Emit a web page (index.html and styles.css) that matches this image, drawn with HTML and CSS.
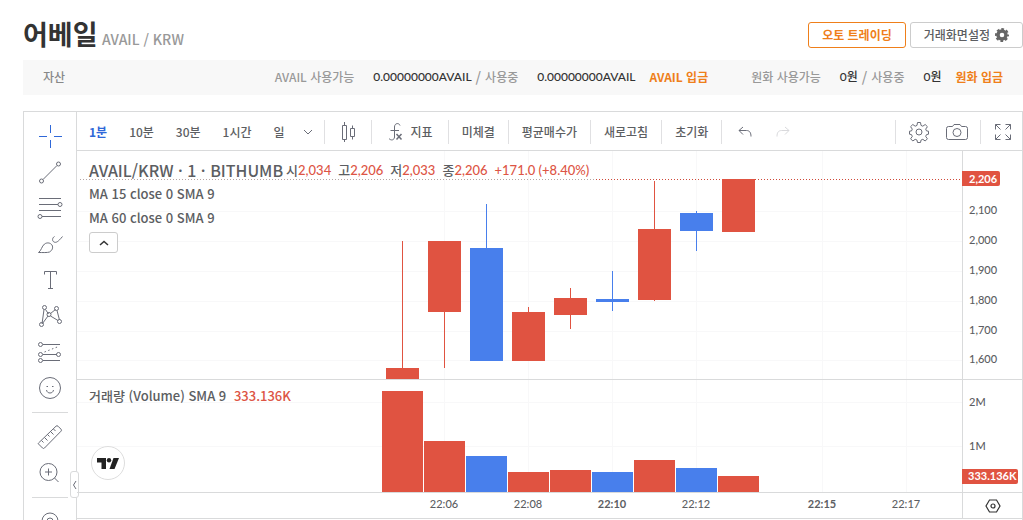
FILE: index.html
```html
<!DOCTYPE html>
<html lang="ko">
<head>
<meta charset="utf-8">
<title>어베일 AVAIL / KRW</title>
<link rel="stylesheet" href="styles.css">
</head>
<body>
<main class="page">
  <header class="head">
    <h1 class="coin">어베일 <span class="pair">AVAIL / KRW</span></h1>
    <div class="head-actions">
      <button class="btn btn-accent" type="button">오토 트레이딩</button>
      <button class="btn" type="button">거래화면설정
        <svg class="cog" width="14" height="14" viewBox="0 0 14 14" aria-hidden="true"><circle cx="7" cy="7" r="4" fill="none" stroke="#666" stroke-width="3.4"/><circle cx="7" cy="7" r="6" fill="none" stroke="#666" stroke-width="2" stroke-dasharray="2.7 2.01" stroke-dashoffset="1.35"/></svg>
      </button>
    </div>
  </header>

  <section class="assets">
    <span class="assets-title">자산</span>
    <div class="asset">
      <span class="muted">AVAIL 사용가능</span><b class="amount">0.00000000AVAIL</b><span class="slash">/</span><span class="muted">사용중</span><b class="amount">0.00000000AVAIL</b><a class="deposit" href="#avail">AVAIL 입금</a>
    </div>
    <div class="asset">
      <span class="muted">원화 사용가능</span><b class="amount">0원</b><span class="slash">/</span><span class="muted">사용중</span><b class="amount">0원</b><a class="deposit" href="#krw">원화 입금</a>
    </div>
  </section>

  <section class="widget">
    <nav class="tools" aria-label="그리기 도구">
      <button class="tool active" type="button" aria-label="십자선"><svg width="28" height="28"><path d="M14.5 3v8M14.5 18v8M3 14.5h8M18 14.5h8"/></svg></button>
      <button class="tool" type="button" aria-label="추세선"><svg width="28" height="28"><path d="M7 21.500L21 7.500"/><circle cx="5.500" cy="23" r="2"/><circle cx="22.500" cy="6" r="2"/></svg></button>
      <button class="tool" type="button" aria-label="피보나치"><svg width="28" height="28"><path d="M3 4.500h22M3 10.500h19M3 16.500h22M6 22.500h19"/><circle cx="24" cy="10.500" r="2"/><circle cx="4" cy="22.500" r="2"/></svg></button>
      <button class="tool" type="button" aria-label="브러시"><svg width="28" height="28"><path d="M2.500 22.500c3-2 3-6 6-8.500 3-2 6-1 7.500 1 1.500 3 0 5.500-2.500 7-2 .800-7 .500-11 .500zM18.500 6.500c-2.500 1.500-2.500 4.500-.500 5.500 2 1 4 0 8.500-5.500"/></svg></button>
      <button class="tool" type="button" aria-label="텍스트"><svg width="28" height="28"><path d="M8.500 8.500v-3h12v3M14.500 5.500v17M12 22.500h5"/></svg></button>
      <button class="tool" type="button" aria-label="패턴"><svg width="28" height="28"><path d="M8 7.500L6 22M9.500 7.500l3 4.500M14.500 11.500l5-4M21 8.500l2.500 9.500M14.500 14l7.500 4.500M12 14l-5.500 7.500"/><circle cx="8.500" cy="5.500" r="2"/><circle cx="20.500" cy="6.500" r="2"/><circle cx="13" cy="12.500" r="2"/><circle cx="23.500" cy="19.500" r="2"/><circle cx="5.500" cy="22.500" r="2"/></svg></button>
      <button class="tool" type="button" aria-label="예측"><svg width="28" height="28"><path d="M7 6.500h17M7 16.500h14M7 22.500h17"/><path d="M8.500 14l14-5.500" stroke-dasharray="1.500 2.500"/><circle cx="4.500" cy="6.500" r="2"/><circle cx="4.500" cy="16.500" r="2"/><circle cx="22.500" cy="16.500" r="2"/><circle cx="4.500" cy="22.500" r="2"/></svg></button>
      <button class="tool" type="button" aria-label="이모지"><svg width="28" height="28"><circle cx="14" cy="14" r="10.500"/><path d="M10.500 16c.500 4 6.500 4 7 0M10.500 12.500h1.500M16 12.500h1.500"/></svg></button>
      <hr class="tool-rule">
      <button class="tool" type="button" aria-label="측정"><svg width="28" height="28"><path d="M2.500 20L20 3.200q1-1 2 0l3 3q1 1 0 2L8.500 25q-1 1-2 0l-4-4q-.500-.500 0-1zM5.500 17.500l2 2M8.500 14.500l3 3M11.500 11.500l2 2M14.500 8.500l3 3M17.500 6l2 2"/></svg></button>
      <button class="tool" type="button" aria-label="확대"><svg width="28" height="28"><circle cx="12.500" cy="13" r="8.500"/><path d="M12.500 9.500v7M9 13h7M18.500 19l4 4"/></svg></button>
      <hr class="tool-rule">
      <button class="tool" type="button" aria-label="자석"><svg width="28" height="28"><path d="M6 20v-7a8 8 0 0 1 16 0v7"/><circle cx="14" cy="13" r="3"/></svg></button>
      <button class="collapse" type="button" aria-label="접기"><svg width="5" height="10"><path d="M4 1L1.500 5 4 9"/></svg></button>
    </nav>

    <div class="main">
      <div class="bar">
        <div class="group intervals">
          <button class="item on" type="button">1분</button>
          <button class="item" type="button">10분</button>
          <button class="item" type="button">30분</button>
          <button class="item" type="button">1시간</button>
          <button class="item" type="button">일</button>
          <button class="more" type="button" aria-label="더보기"><svg width="10" height="6"><path d="M1 1l4 4 4-4"/></svg></button>
        </div>
        <div class="group"><button class="item wide" type="button" aria-label="캔들"><svg width="16" height="22"><path d="M2.500 4.500h4v14h-4zM4.500 1v3.500M4.500 18.500V21M10.500 7.500h4v8h-4zM12.500 4.500v3M12.500 15.500v3"/></svg></button></div>
        <div class="group"><button class="item wide" type="button"><svg width="16" height="20"><path d="M13 3.500C12 .500 7.500 1 7.500 5v10c0 3-3.500 4-5.500 1.500M3.500 8.500H12"/><path class="bold" d="M9.500 12l5 5.500M14.500 12l-5 5.500"/></svg>지표</button></div>
        <div class="group"><button class="item" type="button">미체결</button></div>
        <div class="group"><button class="item" type="button">평균매수가</button></div>
        <div class="group"><button class="item" type="button">새로고침</button></div>
        <div class="group"><button class="item" type="button">초기화</button></div>
        <div class="group history">
          <button class="icon" type="button" aria-label="실행 취소"><svg width="14" height="12"><path d="M5 1L1 4.500 5 8.500M1 4.500h7.500c3 0 4.500 2 4.500 6"/></svg></button>
          <button class="icon faded" type="button" aria-label="다시 실행" disabled><svg width="14" height="12"><path d="M9 1l4 3.500-4 4M13 4.500H5.500C2.500 4.500 1 6.500 1 10.500"/></svg></button>
        </div>
        <div class="group end">
          <button class="icon" type="button" aria-label="설정"><svg width="22" height="22" viewBox="0 0 22 22"><circle cx="11" cy="11" r="3"/><path d="M9.500 1.500h3l.5 2.900 1.800.8 2.400-1.700 2.200 2.200-1.700 2.400.8 1.800 2 .3v3l-2 .4-.8 1.800 1.700 2.400-2.200 2.200-2.400-1.700-1.800.8-.5 2.400h-3L9 19.100l-1.800-.8L4.800 20l-2.200-2.200 1.700-2.400-.8-1.800-2-.4v-3l2-.3.800-1.800L2.600 5.700l2.200-2.200 2.400 1.700L9 4.400z"/></svg></button>
          <button class="icon" type="button" aria-label="스크린샷"><svg width="22" height="18"><path d="M2.500 3.500h4l1.500-2h6l1.500 2h4q2 0 2 2v9q0 2-2 2h-17q-2 0-2-2v-9q0-2 2-2z"/><circle cx="11" cy="9.500" r="4"/></svg></button>
        </div>
        <div class="group full"><button class="icon" type="button" aria-label="전체 화면"><svg width="18" height="18"><path d="M1.500 6.500v-5h5M1.500 1.500l5 5M11.500 1.500h5v5M16.500 1.500l-5 5M1.500 11.500v5h5M1.500 16.500l5-5M16.500 11.500v5h-5M16.500 16.500l-5-5"/></svg></button></div>
      </div>

      <div class="chart">
        <div class="pane price">
          <svg class="plot" width="100%" height="228" shape-rendering="crispEdges">
            <g class="grid">
              <path d="M367.500 0v228M451.500 0v228M535.500 0v228M619.500 0v228M745.500 0v228M829.500 0v228"/>
              <line x2="100%" y1="60.500" y2="60.500"/><line x2="100%" y1="90.500" y2="90.500"/><line x2="100%" y1="120.500" y2="120.500"/><line x2="100%" y1="150.500" y2="150.500"/><line x2="100%" y1="180.500" y2="180.500"/><line x2="100%" y1="209.500" y2="209.500"/>
            </g>
            <line class="last soft" x1="3" x2="519" y1="28.500" y2="28.500"/>
            <line class="last" x1="519" x2="100%" y1="28.500" y2="28.500"/>
            <g class="up">
              <path d="M325 90h1v127h-1zM309 217h33v11h-33z"/>
              <path d="M367 161h1v56h-1zM351 90h33v71h-33z"/>
              <path d="M451 156h1v5h-1zM435 161h33v49h-33z"/>
              <path d="M493 137h1v41h-1zM477 147h33v17h-33z"/>
              <path d="M577 30h1v120h-1zM561 78h33v71h-33z"/>
              <path d="M645 28h33v53h-33z"/>
            </g>
            <g class="down">
              <path d="M409 53h1v44h-1zM393 97h33v113h-33z"/>
              <path d="M535 120h1v40h-1zM519 148h33v3h-33z"/>
              <path d="M619 60h1v40h-1zM603 62h33v18h-33z"/>
            </g>
          </svg>
          <div class="legend">
            <div class="legend-main"><span class="symbol">AVAIL/KRW · 1 · BITHUMB</span><span>시<i>2,034</i></span><span>고<i>2,206</i></span><span>저<i>2,033</i></span><span>종<i>2,206</i></span><span><i>+171.0 (+8.40%)</i></span></div>
            <div class="study">MA 15 close 0 SMA 9</div>
            <div class="study">MA 60 close 0 SMA 9</div>
            <button class="fold" type="button" aria-label="범례 접기"><svg width="10" height="6"><path d="M1 5l4-3.500L9 5"/></svg></button>
          </div>
        </div>
        <svg class="axis" width="60" height="228">
          <path class="tag" d="M-1 20h36q2 0 2 2v11q0 2-2 2H-1z"/>
          <text class="tag-text" x="6" y="32">2,206</text>
          <text x="6" y="63">2,100</text><text x="6" y="93">2,000</text><text x="6" y="123">1,900</text><text x="6" y="153">1,800</text><text x="6" y="183">1,700</text><text x="6" y="212">1,600</text>
        </svg>

        <div class="pane volume">
          <svg class="plot" width="100%" height="112" shape-rendering="crispEdges">
            <g class="grid">
              <path d="M367.500 0v112M451.500 0v112M535.500 0v112M619.500 0v112M745.500 0v112M829.500 0v112"/>
              <line x2="100%" y1="22.500" y2="22.500"/><line x2="100%" y1="66.500" y2="66.500"/>
            </g>
            <path class="up" d="M305 11h41v101h-41zM347 61h41v51h-41zM431 92h41v20h-41zM473 90h41v22h-41zM557 80h41v32h-41zM641 96h41v16h-41z"/>
            <path class="down" d="M389 76h41v36h-41zM515 92h41v20h-41zM599 88h41v24h-41z"/>
          </svg>
          <div class="legend volume-legend">거래량 (Volume) SMA 9 <span class="value">333.136K</span></div>
          <svg class="mark" width="34" height="34" role="img" aria-label="TradingView"><circle cx="17" cy="17" r="16.500"/><path d="M6 12h9v11h-4.500v-6.500H6z"/><path d="M22.500 12H28l-4.500 11H18.500z"/><circle class="dot" cx="18" cy="14.200" r="2.200"/></svg>
        </div>
        <svg class="axis" width="60" height="112">
          <text x="6" y="26">2M</text><text x="6" y="70">1M</text>
          <path class="tag" d="M-1 89h54q2 0 2 2v11q0 2-2 2H-1z"/>
          <text class="tag-text" x="5" y="100">333.136K</text>
        </svg>

        <svg class="times" width="100%" height="25">
          <text x="367" y="15">22:06</text><text x="451" y="15">22:08</text><text class="strong" x="535" y="15">22:10</text><text x="619" y="15">22:12</text><text class="strong" x="745" y="15">22:15</text><text x="829" y="15">22:17</text>
        </svg>
        <button class="corner" type="button" aria-label="축 설정"><svg width="16" height="14"><path d="M4.500 1h7L15 7l-3.500 6h-7L1 7z"/><circle cx="8" cy="7" r="2"/></svg></button>
      </div>
    </div>
  </section>
</main>
</body>
</html>
```
FILE: styles.css
```css
* { box-sizing: border-box; }
html, body { height: 100%; }
body {
  margin: 0;
  overflow: hidden;
  background: #fff;
  color: #5c5e62;
  font: 500 12px/18px "Noto Sans CJK KR", sans-serif;
}
button {
  margin: 0;
  padding: 0;
  border: 0;
  background: none;
  color: inherit;
  font: inherit;
  cursor: pointer;
}
svg { display: block; flex: none; }
.page { padding-left: 23px; }

.head {
  display: flex;
  justify-content: space-between;
  height: 60px;
  padding-top: 22px;
}
.coin { margin: 0; color: #333; font-size: 27px; font-weight: 700; line-height: 24px; white-space: nowrap; }
.pair { margin-left: -3px; color: #999; font-size: 14px; font-weight: 500; }
.head-actions { display: flex; gap: 4px; }
.btn {
  display: flex;
  align-items: center;
  gap: 5px;
  height: 26px;
  padding: 0 13px;
  border: 1px solid #ccc;
  border-radius: 3px;
  background: #fff;
  color: #5c5e62;
  white-space: nowrap;
}
.btn-accent { border-color: #ef7f1a; color: #ef7f1a; font-weight: 700; }

.assets {
  display: flex;
  align-items: center;
  gap: 43px;
  height: 35px;
  padding: 0 20px 2px;
  background: #f8f8f8;
  white-space: nowrap;
}
.assets-title { margin-right: auto; color: #888; }
.asset { display: flex; align-items: center; }
.muted { color: #999; }
.amount { margin-left: 19px; color: #333; font-family: "Lato", "Noto Sans CJK KR", sans-serif; font-weight: 500; }
.slash { padding: 0 4px; color: #999; font-size: 14px; }
.deposit { margin-left: 14px; color: #ef7f1a; font-weight: 700; text-decoration: none; }

.widget { display: flex; margin-top: 16px; border: 1px solid #d9dadb; border-bottom: 0; }
.tools {
  position: relative;
  display: flex;
  flex: none;
  flex-direction: column;
  align-items: center;
  width: 53px;
  height: 420px;
  padding-top: 6px;
  border-right: 1px solid #d9dadb;
}
.tool { display: grid; flex: none; place-items: center; width: 36px; height: 36px; }
.tools svg, .bar svg { fill: none; stroke: #6a6d78; }
.tools .active svg { stroke: #2f68d8; }
.tool-rule { flex: none; width: 36px; height: 1px; margin: 6px 0; border: 0; background: #d9dadb; }
.collapse {
  position: absolute;
  right: -3px;
  bottom: 34px;
  display: grid;
  place-items: center;
  width: 9px;
  height: 27px;
  border: 1px solid #d9dadb;
  border-radius: 3px;
  background: #fff;
}

.main { flex: 1; min-width: 0; }
.bar { display: flex; align-items: center; height: 39px; padding-top: 2px; border-bottom: 1px solid #d9dadb; white-space: nowrap; }
.group { display: flex; align-items: center; height: 24px; border-right: 1px solid #e0e0e2; }
.item { display: flex; align-items: center; gap: 8px; padding: 0 13px; }
.wide { padding: 0 15px; }
.intervals { padding-left: 1px; }
.intervals .item { padding: 0 11px; }
.on { color: #2f68d8; font-weight: 700; }
.more { display: grid; place-items: center; width: 28px; padding-right: 3px; }
.bar .bold { stroke-width: 1.5; }
.history { gap: 24px; padding-left: 16px; border: 0; }
.faded { opacity: .25; }
.end { gap: 16px; margin-left: auto; padding: 0 12px; border-left: 1px solid #e0e0e2; }
.full { padding: 0 10px 0 13px; border: 0; }

.chart { display: grid; grid-template-columns: minmax(0, 1fr) 60px; }
.pane { position: relative; overflow: hidden; border-bottom: 1px solid #d9dadb; }
.plot { width: 100%; }
.grid { fill: none; stroke: #f8f8f9; }
.last { stroke: #e05341; stroke-dasharray: 1 1; }
.soft { stroke: #b5a5a3; stroke-dasharray: 1 2; }
.last:not(.soft) { stroke: #cf4a3a; stroke-dasharray: 1 2; }
.up, .tag { fill: #e05341; }
.down { fill: #487fec; }
.axis { height: 100%; border-left: 1px solid #d9dadb; border-bottom: 1px solid #d9dadb; overflow: visible; }
.axis text, .times text { fill: #5c5e62; font: 500 11px "Lato", sans-serif; }
.axis .tag-text { fill: #fff; font-weight: 700; }
.times text { text-anchor: middle; }
.times .strong { font-weight: 700; }
.times, .corner { height: 26px; border-bottom: 1px solid #d9dadb; }
.corner { display: grid; place-items: center; border-left: 1px solid #d9dadb; }
.corner svg { fill: none; stroke: #333; stroke-width: 1.2; }

.legend { position: absolute; top: 7px; left: 12px; white-space: nowrap; }
.legend-main { display: flex; align-items: center; gap: 7px; height: 24px; font-size: 13px; }
.symbol { margin-right: -4px; font-size: 16px; }
.legend i { color: #dd5545; font: 500 13px "Lato", sans-serif; }
.study { height: 24px; font-size: 13px; line-height: 24px; }
.fold { display: grid; place-items: center; width: 29px; height: 21px; margin-top: 2px; border: 1px solid #ccc; border-radius: 3px; background: #fff; }
.fold svg { fill: none; stroke: #333; stroke-width: 1.5; }
.volume-legend { font-size: 13px; }
.value { margin-left: 4px; color: #dd5545; }
.mark { position: absolute; bottom: 12px; left: 14px; fill: #222; }
.mark circle { fill: #fff; stroke: #ddd; }
.mark .dot { fill: #222; stroke: none; }
```
